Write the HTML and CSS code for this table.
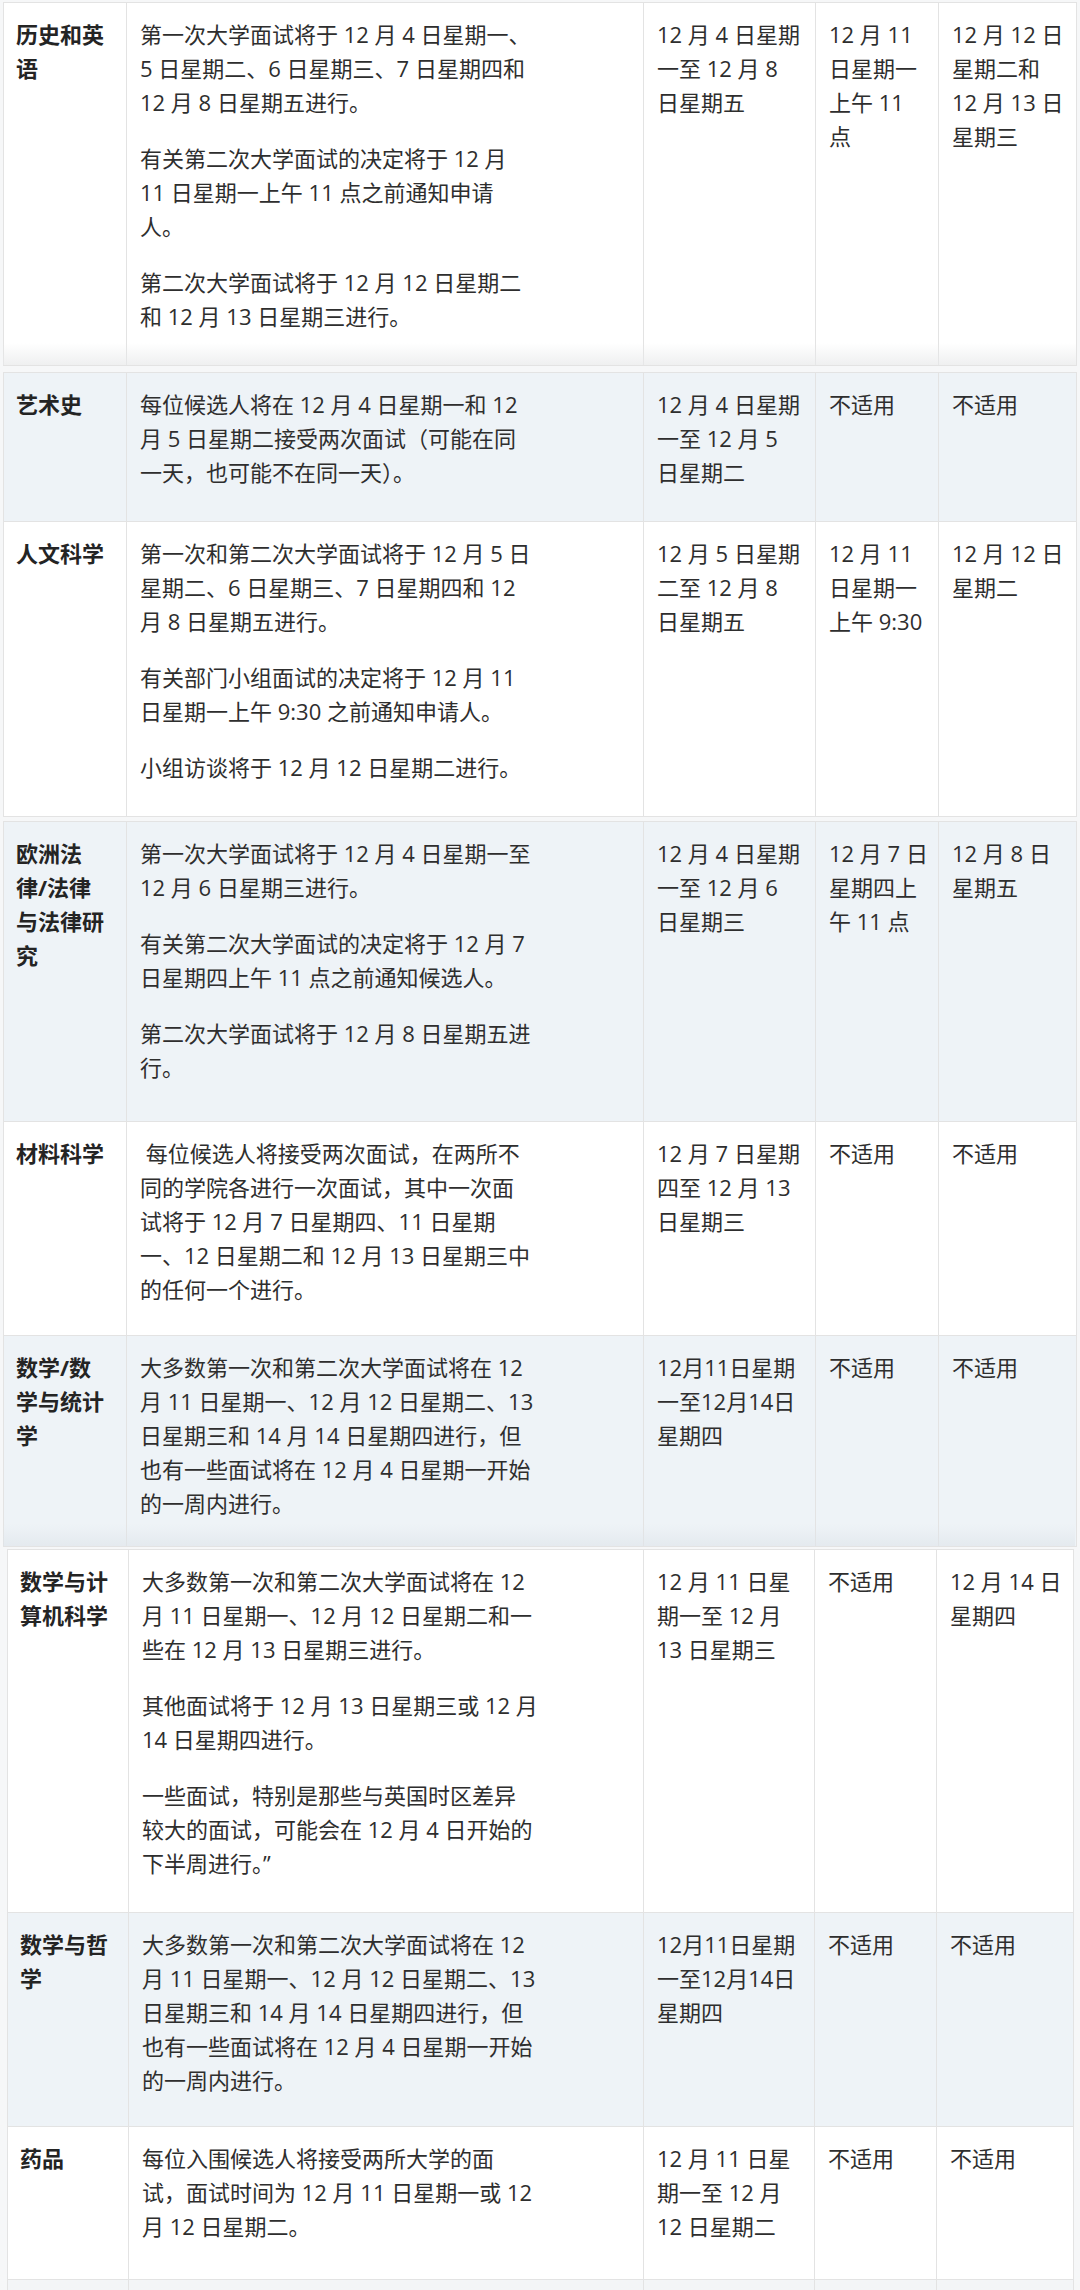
FILE: index.html
```html
<!DOCTYPE html>
<html lang="zh-CN">
<head>
<meta charset="utf-8">
<title>面试日期</title>
<link rel="stylesheet" href="styles.css">
</head>
<body>
<div class="sheet">

  <div class="block block-a shade">
    <table class="grid">
      <colgroup><col class="c1"><col class="c2"><col class="c3"><col class="c4"><col class="c5"></colgroup>
      <tbody>
        <tr class="white">
          <th>历史和英<br>语</th>
          <td><p>第一次大学面试将于 12 月 4 日星期一、<br>5 日星期二、6 日星期三、7 日星期四和<br>12 月 8 日星期五进行。</p>
              <p>有关第二次大学面试的决定将于 12 月<br>11 日星期一上午 11 点之前通知申请<br>人。</p>
              <p>第二次大学面试将于 12 月 12 日星期二<br>和 12 月 13 日星期三进行。</p></td>
          <td><p>12 月 4 日星期<br>一至 12 月 8<br>日星期五</p></td>
          <td><p>12 月 11<br>日星期一<br>上午 11<br>点</p></td>
          <td><p>12 月 12 日<br>星期二和<br>12 月 13 日<br>星期三</p></td>
        </tr>
      </tbody>
    </table>
  </div>

  <div class="block block-b">
    <table class="grid">
      <colgroup><col class="c1"><col class="c2"><col class="c3"><col class="c4"><col class="c5"></colgroup>
      <tbody>
        <tr class="blue">
          <th>艺术史</th>
          <td><p>每位候选人将在 12 月 4 日星期一和 12<br>月 5 日星期二接受两次面试（可能在同<br>一天，也可能不在同一天）。</p></td>
          <td><p>12 月 4 日星期<br>一至 12 月 5<br>日星期二</p></td>
          <td><p>不适用</p></td>
          <td><p>不适用</p></td>
        </tr>
        <tr class="white">
          <th>人文科学</th>
          <td><p>第一次和第二次大学面试将于 12 月 5 日<br>星期二、6 日星期三、7 日星期四和 12<br>月 8 日星期五进行。</p>
              <p>有关部门小组面试的决定将于 12 月 11<br>日星期一上午 9:30 之前通知申请人。</p>
              <p>小组访谈将于 12 月 12 日星期二进行。</p></td>
          <td><p>12 月 5 日星期<br>二至 12 月 8<br>日星期五</p></td>
          <td><p>12 月 11<br>日星期一<br>上午 9:30</p></td>
          <td><p>12 月 12 日<br>星期二</p></td>
        </tr>
      </tbody>
    </table>
  </div>

  <div class="block block-c shade shade-blue">
    <table class="grid">
      <colgroup><col class="c1"><col class="c2"><col class="c3"><col class="c4"><col class="c5"></colgroup>
      <tbody>
        <tr class="blue tall">
          <th>欧洲法<br>律/法律<br>与法律研<br>究</th>
          <td><p>第一次大学面试将于 12 月 4 日星期一至<br>12 月 6 日星期三进行。</p>
              <p>有关第二次大学面试的决定将于 12 月 7<br>日星期四上午 11 点之前通知候选人。</p>
              <p>第二次大学面试将于 12 月 8 日星期五进<br>行。</p></td>
          <td><p>12 月 4 日星期<br>一至 12 月 6<br>日星期三</p></td>
          <td><p>12 月 7 日<br>星期四上<br>午 11 点</p></td>
          <td><p>12 月 8 日<br>星期五</p></td>
        </tr>
        <tr class="white snug">
          <th>材料科学</th>
          <td><p>&nbsp;每位候选人将接受两次面试，在两所不<br>同的学院各进行一次面试，其中一次面<br>试将于 12 月 7 日星期四、11 日星期<br>一、12 日星期二和 12 月 13 日星期三中<br>的任何一个进行。</p></td>
          <td><p>12 月 7 日星期<br>四至 12 月 13<br>日星期三</p></td>
          <td><p>不适用</p></td>
          <td><p>不适用</p></td>
        </tr>
        <tr class="blue short">
          <th>数学/数<br>学与统计<br>学</th>
          <td><p>大多数第一次和第二次大学面试将在 12<br>月 11 日星期一、12 月 12 日星期二、13<br>日星期三和 14 月 14 日星期四进行，但<br>也有一些面试将在 12 月 4 日星期一开始<br>的一周内进行。</p></td>
          <td><p>12月11日星期<br>一至12月14日<br>星期四</p></td>
          <td><p>不适用</p></td>
          <td><p>不适用</p></td>
        </tr>
      </tbody>
    </table>
  </div>

  <div class="block block-d">
    <table class="grid grid-d">
      <colgroup><col class="d1"><col class="d2"><col class="d3"><col class="d4"><col class="d5"></colgroup>
      <tbody>
        <tr class="white">
          <th>数学与计<br>算机科学</th>
          <td><p>大多数第一次和第二次大学面试将在 12<br>月 11 日星期一、12 月 12 日星期二和一<br>些在 12 月 13 日星期三进行。</p>
              <p>其他面试将于 12 月 13 日星期三或 12 月<br>14 日星期四进行。</p>
              <p>一些面试，特别是那些与英国时区差异<br>较大的面试，可能会在 12 月 4 日开始的<br>下半周进行。”</p></td>
          <td><p>12 月 11 日星<br>期一至 12 月<br>13 日星期三</p></td>
          <td><p>不适用</p></td>
          <td><p>12 月 14 日<br>星期四</p></td>
        </tr>
        <tr class="blue snug">
          <th>数学与哲<br>学</th>
          <td><p>大多数第一次和第二次大学面试将在 12<br>月 11 日星期一、12 月 12 日星期二、13<br>日星期三和 14 月 14 日星期四进行，但<br>也有一些面试将在 12 月 4 日星期一开始<br>的一周内进行。</p></td>
          <td><p>12月11日星期<br>一至12月14日<br>星期四</p></td>
          <td><p>不适用</p></td>
          <td><p>不适用</p></td>
        </tr>
        <tr class="white roomy">
          <th>药品</th>
          <td><p>每位入围候选人将接受两所大学的面<br>试，面试时间为 12 月 11 日星期一或 12<br>月 12 日星期二。</p></td>
          <td><p>12 月 11 日星<br>期一至 12 月<br>12 日星期二</p></td>
          <td><p>不适用</p></td>
          <td><p>不适用</p></td>
        </tr>
        <tr class="tail">
          <th></th><td></td><td></td><td></td><td></td>
        </tr>
      </tbody>
    </table>
  </div>

</div>
</body>
</html>
```

FILE: styles.css
```css
html, body {
  margin: 0;
  padding: 0;
}

body {
  background: #f6f7f8;
  color: #2e2e2e;
  font-family: "Open Sans", "Noto Sans CJK SC", sans-serif;
  font-size: 22px;
  line-height: 34px;
}

.sheet {
  display: flex;
  flex-direction: column;
  padding-top: 2px;
}

.block {
  position: relative;
}

.block-a {
  margin-left: 3px;
  width: 1073px;
}

.block-b {
  margin-top: 6px;
  margin-left: 3px;
  width: 1071px;
}

.block-c {
  margin-top: 4px;
  margin-left: 3px;
  width: 1072px;
}

.block-d {
  margin-top: 2px;
  margin-left: 7px;
  width: 1066px;
}

/* soft fade at the lower edge of a screenshot piece */
.shade::after {
  content: "";
  position: absolute;
  left: 0;
  right: 0;
  bottom: 1px;
  height: 22px;
  background: linear-gradient(to bottom, rgba(235, 236, 237, 0), rgba(232, 233, 234, 0.7));
  pointer-events: none;
}

.shade-blue::after {
  background: linear-gradient(to bottom, rgba(225, 230, 235, 0), rgba(222, 228, 233, 0.6));
}

.grid {
  width: 100%;
  table-layout: fixed;
  border-collapse: collapse;
  border: 1px solid #e3e3e3;
}

.c1 { width: 123px; }
.c2 { width: 517px; }
.c3 { width: 172px; }
.c4 { width: 123px; }
.c5 { width: 138px; }

.d1 { width: 121px; }
.d2 { width: 515px; }
.d3 { width: 171px; }
.d4 { width: 122px; }
.d5 { width: 137px; }

.grid th,
.grid td {
  border: 1px solid #e3e3e3;
  padding: 14px 10px 10px 13px;
  vertical-align: top;
  text-align: left;
  white-space: nowrap;
}

.grid th {
  padding-left: 12px;
  font-weight: 700;
  color: #242424;
}

.grid p {
  margin: 0 0 22px;
}

.white > th,
.white > td {
  background: #ffffff;
}

.blue > th,
.blue > td {
  background: #eef3f7;
}

.tall > th,
.tall > td {
  padding-bottom: 15px;
}

.snug > th,
.snug > td {
  padding-bottom: 7px;
}

.short > th,
.short > td {
  padding-bottom: 4px;
}

.roomy > th,
.roomy > td {
  padding-bottom: 14px;
}

.tail > th,
.tail > td {
  background: #f3f5f7;
  height: 30px;
  padding: 0;
}
```
